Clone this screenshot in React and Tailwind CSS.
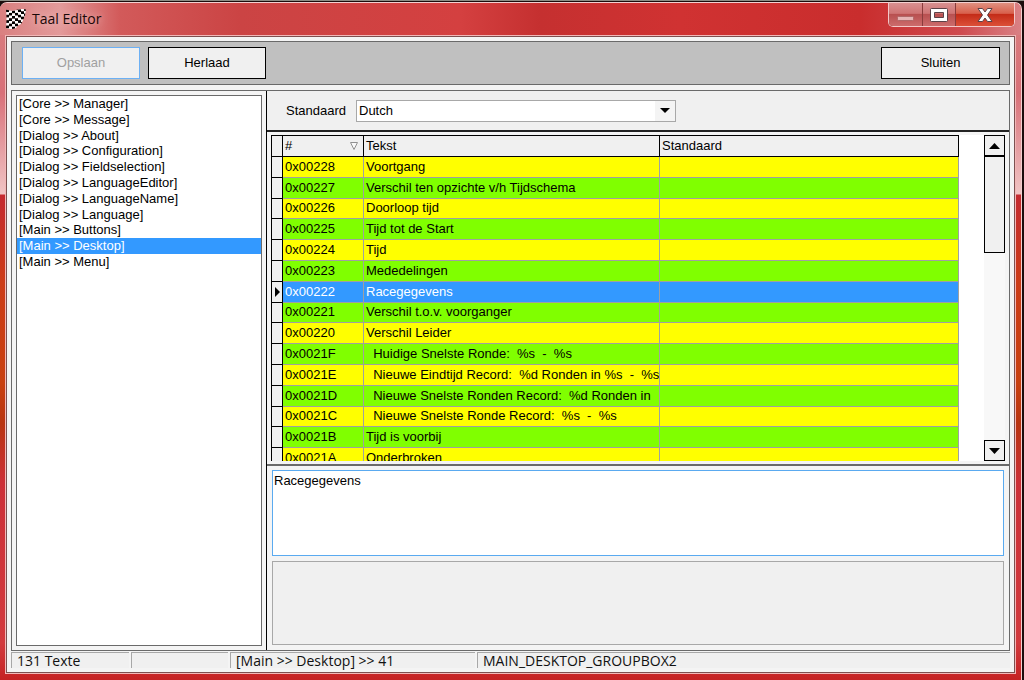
import React, { useState } from 'react';

const sections = [
  '[Core >> Manager]',
  '[Core >> Message]',
  '[Dialog >> About]',
  '[Dialog >> Configuration]',
  '[Dialog >> Fieldselection]',
  '[Dialog >> LanguageEditor]',
  '[Dialog >> LanguageName]',
  '[Dialog >> Language]',
  '[Main >> Buttons]',
  '[Main >> Desktop]',
  '[Main >> Menu]',
];

const rows = [
  { id: '0x00228', text: 'Voortgang' },
  { id: '0x00227', text: 'Verschil ten opzichte v/h Tijdschema' },
  { id: '0x00226', text: 'Doorloop tijd' },
  { id: '0x00225', text: 'Tijd tot de Start' },
  { id: '0x00224', text: 'Tijd' },
  { id: '0x00223', text: 'Mededelingen' },
  { id: '0x00222', text: 'Racegegevens' },
  { id: '0x00221', text: 'Verschil t.o.v. voorganger' },
  { id: '0x00220', text: 'Verschil Leider' },
  { id: '0x0021F', text: '  Huidige Snelste Ronde:  %s  -  %s' },
  { id: '0x0021E', text: '  Nieuwe Eindtijd Record:  %d Ronden in %s  -  %s' },
  { id: '0x0021D', text: '  Nieuwe Snelste Ronden Record:  %d Ronden in' },
  { id: '0x0021C', text: '  Nieuwe Snelste Ronde Record:  %s  -  %s' },
  { id: '0x0021B', text: 'Tijd is voorbij' },
  { id: '0x0021A', text: 'Onderbroken' },
];

// Waving checkered flag, columns are shifted to follow the wave
const FlagIcon = () => {
  const squares = [];
  for (let r = -1; r < 8; r++) {
    for (let c = 0; c < 7; c++) {
      const x = c * 3;
      const y = r * 2.7 + [0.4, 1.2, 1.6, 1.2, 0.4, -0.4, -0.8][c];
      squares.push(
        <rect key={`${r}-${c}`} x={x} y={y} width="3.1" height="2.8" fill={(r + c) % 2 ? '#fff' : '#000'} />
      );
    }
  }
  return (
    <svg width="20" height="21" viewBox="0 0 20 21" aria-hidden="true">
      <defs>
        <clipPath id="flag">
          <path d="M0 0.500 Q5 2.500 10 1 T20 0.500 Q19 9 15 15 Q12 15.500 10 19 Q5 21 0 19 Q1 10 0 0.500Z" />
        </clipPath>
      </defs>
      <g clipPath="url(#flag)">{squares}</g>
    </svg>
  );
};

const TitleBar = () => (
  <div className="flex h-8 items-start justify-between bg-[linear-gradient(to_right,#d98080_0px,#e39a9a_60px,#d25a5a_120px,#cb4444_240px,#d44040_460px,#c53030_540px,#d03232_680px,#c92d2d_860px,#cf4a4e_960px,#d98084_1020px)] px-[6px]">
    <div className="flex h-full items-center gap-[6px]">
      <FlagIcon />
      <h1 className="font-['Open_Sans','Noto_Sans',sans-serif] text-[14px] leading-5 text-[#1a0808] [text-shadow:0_0_8px_#f4cccc]">
        Taal Editor
      </h1>
    </div>
    <div className="flex h-6 overflow-hidden rounded-b-[5px] border border-t-0 border-[#f3c8c8] bg-[#7a3030]">
      <button
        aria-label="Minimaliseren"
        className="flex w-[34px] items-end justify-center border-r border-[#8a3c3c] bg-[linear-gradient(to_bottom,#d89090_0%,#cf7474_45%,#b85050_50%,#cc6c6c_100%)] pb-[5px]"
      >
        <svg width="17" height="5" viewBox="0 0 17 5">
          <rect x="0.5" y="0.5" width="16" height="4" rx="1" fill="#e6b4b4" stroke="#b06868" />
        </svg>
      </button>
      <button
        aria-label="Maximaliseren"
        className="flex w-[33px] items-center justify-center border-r border-[#8a3c3c] bg-[linear-gradient(to_bottom,#d89090_0%,#cf7474_45%,#b85050_50%,#cc6c6c_100%)]"
      >
        <svg width="18" height="14" viewBox="0 0 18 14">
          <path
            d="M1.500 0.500h15a1 1 0 0 1 1 1v11a1 1 0 0 1-1 1h-15a1 1 0 0 1-1-1v-11a1 1 0 0 1 1-1ZM4.500 4.500v5h9v-5Z"
            fill="#fff"
            fillRule="evenodd"
            stroke="#5a4248"
          />
        </svg>
      </button>
      <button
        aria-label="Venster sluiten"
        className="flex w-[58px] items-center justify-center bg-[linear-gradient(to_bottom,#e09080_0%,#d8604c_45%,#c42c18_50%,#dc5038_100%)]"
      >
        <svg width="16" height="14" viewBox="0 0 16 14">
          <path d="M1 0.500h4.500L8 4l2.500-3.500H15L10.500 7l4.500 6.500h-4.500L8 10l-2.500 3.500H1L5.500 7Z" fill="#fff" stroke="#5a4248" />
        </svg>
      </button>
    </div>
  </div>
);

const Toolbar = () => (
  <div className="flex h-11 shrink-0 items-center border border-[#6a6a6a] bg-[#c0c0c0] pl-[10px] pr-[9px]">
    <button disabled className="h-8 w-[118px] border border-[#6cb0f4] bg-[#f0f0f0] text-[#a0a0a0]">
      Opslaan
    </button>
    <button className="ml-2 h-8 w-[118px] border border-black bg-[#f0f0f0]">Herlaad</button>
    <button className="ml-auto h-8 w-[119px] border border-black bg-[#f0f0f0]">Sluiten</button>
  </div>
);

const SectionList = ({ selected, onSelect }) => (
  <div className="flex w-[255px] shrink-0 flex-col border-r border-black p-1">
    <div className="flex-1 border border-[#6a6a6a] bg-white">
      <ul className="grid h-[174px] auto-rows-fr">
        {sections.map((section) => (
          <li key={section} className="flex">
            <button
              onClick={() => onSelect(section)}
              className={`flex flex-1 items-center whitespace-nowrap pl-[2px] leading-4 ${
                section === selected ? 'bg-[#3399ff] text-white' : 'bg-white'
              }`}
            >
              {section}
            </button>
          </li>
        ))}
      </ul>
    </div>
  </div>
);

const getRowColor = (index, active) => {
  if (active) return 'bg-[#3399ff] text-white';
  return index % 2 === 0 ? 'bg-[#ffff00]' : 'bg-[#80ff00]';
};

const TextGrid = ({ current, onSelect }) => (
  <div className="flex min-h-0 flex-1 overflow-hidden bg-white">
    <div className="min-w-0 flex-1 overflow-hidden">
      <table className="h-[334px] w-[688px] table-fixed border-separate border-spacing-0 text-left">
        <colgroup>
          <col className="w-[12px]" />
          <col className="w-[81px]" />
          <col className="w-[296px]" />
          <col className="w-[299px]" />
        </colgroup>
        <thead>
          <tr className="h-[22px] bg-[#f0f0f0]">
            <td className="border border-black"></td>
            <th className="border-y border-r border-black px-[2px] font-normal">
              <div className="flex items-center justify-between pr-[3px]">
                #
                <svg width="8" height="8" viewBox="0 0 8 8" aria-hidden="true">
                  <path d="M0.500 0.500h7L4 7.500Z" fill="#f8f8f8" stroke="#909090" />
                </svg>
              </div>
            </th>
            <th className="border-y border-r border-black px-[2px] font-normal">Tekst</th>
            <th className="border-y border-r border-black px-[2px] font-normal">Standaard</th>
          </tr>
        </thead>
        <tbody>
          {rows.map((row, index) => {
            const active = row.id === current;
            return (
              <tr key={row.id} onClick={() => onSelect(row)} className={getRowColor(index, active)}>
                <td className="border-x border-b border-black bg-[#f0f0f0] p-0">
                  {active && (
                    <svg width="6" height="10" viewBox="0 0 6 10" className="ml-[3px]" aria-hidden="true">
                      <path d="M0 0l5 5-5 5Z" fill="#000" />
                    </svg>
                  )}
                </td>
                <td className="border-b border-r border-[#a0a0a0] px-[2px] py-0">{row.id}</td>
                <td className="overflow-hidden whitespace-pre border-b border-r border-[#a0a0a0] px-[2px] py-0">
                  {row.text}
                </td>
                <td className="border-b border-r border-[#a0a0a0] p-0"></td>
              </tr>
            );
          })}
        </tbody>
      </table>
    </div>
    <div className="flex w-[21px] shrink-0 flex-col bg-[#f8f8f8]">
      <button aria-label="Omhoog" className="flex h-[21px] items-center justify-center border border-black bg-[#f0f0f0]">
        <svg width="11" height="6" viewBox="0 0 11 6">
          <path d="M0 6L5.500 0L11 6Z" fill="#000" />
        </svg>
      </button>
      <div className="h-[97px] border border-black bg-[#f0f0f0]"></div>
      <button aria-label="Omlaag" className="mt-auto flex h-[21px] items-center justify-center border border-black bg-[#f0f0f0]">
        <svg width="11" height="6" viewBox="0 0 11 6">
          <path d="M0 0L5.500 6L11 0Z" fill="#000" />
        </svg>
      </button>
    </div>
  </div>
);

const StatusBar = ({ section }) => (
  <div className="mt-px flex h-4 shrink-0 gap-[2px] whitespace-nowrap font-['Open_Sans','Noto_Sans',sans-serif] text-[14px] leading-4 text-[#111]">
    <div className="w-[118px] border-l border-t border-[#a8a8a8] bg-[#f0f0f0] pl-[5px]">131 Texte</div>
    <div className="w-[97px] border-l border-t border-[#a8a8a8] bg-[#f0f0f0]"></div>
    <div className="w-[245px] border-l border-t border-[#a8a8a8] bg-[#f0f0f0] pl-[5px]">{section} &gt;&gt; 41</div>
    <div className="flex-1 border-l border-t border-[#a8a8a8] bg-[#f0f0f0] pl-[5px]">MAIN_DESKTOP_GROUPBOX2</div>
  </div>
);

export default function App() {
  const [section, setSection] = useState('[Main >> Desktop]');
  const [current, setCurrent] = useState('0x00222');
  const [value, setValue] = useState('Racegegevens');

  const selectRow = (row) => {
    setCurrent(row.id);
    setValue(row.text);
  };

  return (
    <div className="flex h-screen flex-col border-t border-[#8c8c84] bg-[#1c0c0c] pr-[2px] pt-px font-['Liberation_Sans',Arial,sans-serif] text-[13px] leading-4 text-black">
      <div className="flex min-h-0 flex-1 flex-col overflow-hidden rounded-t-[7px] border-r border-t border-[#f4d0d0] bg-[linear-gradient(to_bottom,#d98080_0px,#d87078_90px,#f0c4c4_191px,#c42a30_192px,#cc3c18_280px,#c84010_380px,#b83410_420px,#cc3038_480px,#d23a3e_640px,#c42020_680px)]">
        <TitleBar />
        <div className="mx-[5px] mb-[6px] flex min-h-0 flex-1 flex-col border border-[#f2b8b8]">
          <div className="flex min-h-0 flex-1 flex-col border border-[#7c5050] bg-[#f4f4f4] p-1">
            <Toolbar />
            <div className="mt-[5px] flex min-h-0 flex-1 border border-[#6a6a6a]">
              <SectionList selected={section} onSelect={setSection} />
              <div className="flex min-w-0 flex-1 flex-col">
                <div className="flex h-[41px] shrink-0 items-center gap-[10px] border-b-2 border-[#222] bg-[#f0f0f0] pl-[19px]">
                  <label htmlFor="language">Standaard</label>
                  <div className="relative w-[320px]">
                    <select
                      id="language"
                      className="block h-[22px] w-full appearance-none border border-[#a8a8a8] bg-white pl-[2px]"
                    >
                      <option>Dutch</option>
                    </select>
                    <span className="pointer-events-none absolute inset-y-px right-px flex w-5 items-center justify-center bg-[#f4f4f4]">
                      <svg width="10" height="5" viewBox="0 0 10 5" aria-hidden="true">
                        <path d="M0 0h10L5 5Z" fill="#000" />
                      </svg>
                    </span>
                  </div>
                </div>
                <div className="flex min-h-0 flex-1 flex-col border-b-2 border-[#6a6a6a] px-1 pb-[3px] pt-[3px]">
                  <TextGrid current={current} onSelect={selectRow} />
                </div>
                <div className="flex shrink-0 flex-col gap-[5px] px-[5px] pb-[5px] pt-1">
                  <textarea
                    aria-label="Tekst"
                    value={value}
                    onChange={(e) => setValue(e.target.value)}
                    className="block h-[86px] w-full resize-none border border-[#5aaaf0] bg-white px-px py-[2px] outline-none"
                  />
                  <div className="h-[84px] border border-[#a8a8a8] bg-[#f0f0f0]"></div>
                </div>
              </div>
            </div>
            <StatusBar section={section} />
          </div>
        </div>
      </div>
    </div>
  );
}
